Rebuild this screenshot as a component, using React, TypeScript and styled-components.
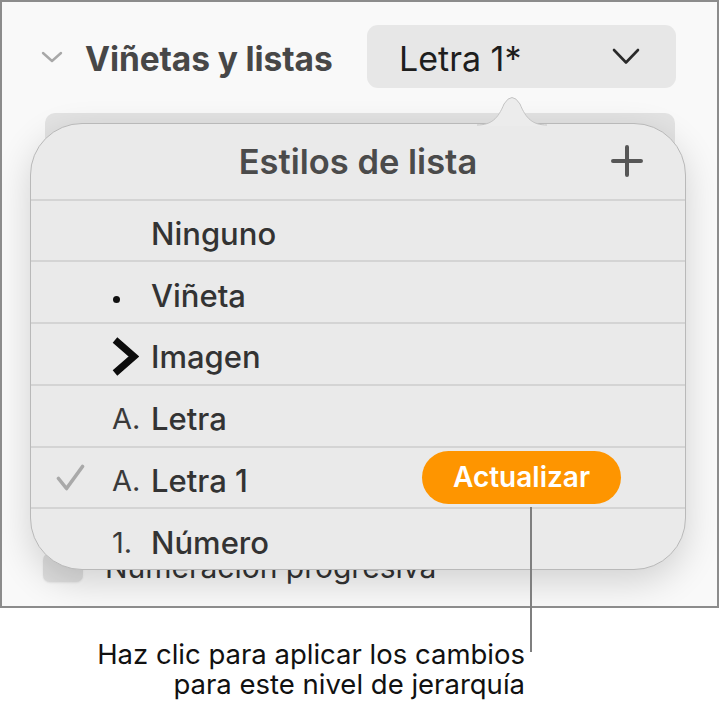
import styled, { createGlobalStyle } from 'styled-components';

const GlobalStyle = createGlobalStyle`
  html, body {
    margin: 0;
    padding: 0;
    background: #ffffff;
  }
  body {
    font-family: 'Inter', 'Noto Sans', sans-serif;
    -webkit-font-smoothing: antialiased;
  }
`;

const Page = styled.div`
  position: relative;
  width: 721px;
  height: 705px;
  overflow: hidden;
`;

const Frame = styled.div`
  position: relative;
  box-sizing: border-box;
  width: 719px;
  height: 608px;
  border: 2px solid #8c8c8c;
  background: #f9f9f9;
  overflow: hidden;
`;

const Header = styled.div`
  display: flex;
  align-items: center;
  padding: 23px 41px 0 39px;
`;

const Disclosure = styled.svg`
  width: 22px;
  height: 12px;
  margin-right: 22px;
  flex-shrink: 0;
`;

const SectionTitle = styled.h2`
  margin: 4px 0 0;
  font-size: 33.5px;
  font-weight: 700;
  color: #474747;
  letter-spacing: -0.1px;
`;

const PopupButton = styled.button`
  margin-left: auto;
  box-sizing: border-box;
  width: 309px;
  height: 63px;
  display: flex;
  align-items: center;
  justify-content: space-between;
  padding: 4px 36px 0 32px;
  border: none;
  border-radius: 11px;
  background: #e7e7e7;
  font-family: inherit;
  font-size: 34px;
  color: #1e1e1e;

  svg {
    margin-top: -4px;
  }
`;

const BehindCard = styled.div`
  margin: 25px 0 0 43px;
  width: 630px;
  height: 80px;
  border-radius: 10px;
  background: #e3e3e3;
`;

const CheckRow = styled.div`
  display: flex;
  align-items: center;
  gap: 22px;
  margin: 360px 0 0 41px;
`;

const CheckBox = styled.div`
  width: 40px;
  height: 29px;
  border-radius: 7px;
  background: #dedede;
  box-shadow: 0 1px 2px rgba(0, 0, 0, 0.08);
`;

const CheckLabel = styled.span`
  font-size: 30px;
  line-height: 29px;
  color: #333333;
`;

const Popover = styled.div`
  position: absolute;
  left: 28px;
  top: 121px;
  box-sizing: border-box;
  width: 656px;
  height: 447px;
  display: flex;
  flex-direction: column;
  background: #eaeaea;
  border: 1px solid #b9b9b9;
  border-radius: 52px;
  box-shadow: 0 12px 36px rgba(0, 0, 0, 0.16);
`;

const Arrow = styled.svg`
  position: absolute;
  left: 446px;
  top: -29px;
  width: 70px;
  height: 31px;
`;

const PopoverHeader = styled.div`
  height: 75px;
  display: grid;
  grid-template-columns: 1fr auto 1fr;
  align-items: center;
`;

const PopoverTitle = styled.div`
  grid-column: 2;
  margin-top: 1px;
  font-size: 34.5px;
  font-weight: 600;
  color: #4b4b4b;
`;

const PlusButton = styled.svg`
  grid-column: 3;
  justify-self: end;
  margin-right: 42px;
  width: 32px;
  height: 32px;
`;

const Row = styled.div`
  box-sizing: border-box;
  height: 62px;
  display: flex;
  align-items: center;
  padding-left: 25px;
  border-top: 2px solid #d4d4d4;
`;

const CheckCell = styled.div`
  width: 56px;
  display: flex;
  align-items: center;
`;

const MarkerCell = styled.div<{ $shift: number }>`
  width: 39px;
  display: flex;
  align-items: center;
  margin-top: ${(p) => p.$shift}px;
  font-size: 29px;
  color: #3a3a3a;
`;

const Dot = styled.span`
  width: 7px;
  height: 7px;
  margin-left: 1px;
  border-radius: 50%;
  background: #111111;
`;

const Label = styled.span`
  margin-top: 6px;
  font-size: 31px;
  font-weight: 500;
  color: #333333;
`;

const UpdateButton = styled.button`
  margin-left: auto;
  margin-right: 64px;
  height: 53px;
  padding: 0 31px;
  border: none;
  border-radius: 27px;
  background: #fe9500;
  color: #ffffff;
  font-family: inherit;
  font-size: 28px;
  font-weight: 600;
`;

const CalloutLine = styled.div`
  position: absolute;
  left: 530px;
  top: 507px;
  width: 2px;
  height: 145px;
  background: #7f7f7f;
`;

const Callout = styled.div`
  margin: 31px 196px 0 0;
  text-align: right;
  font-size: 27.5px;
  color: #111111;
`;

const CalloutLine1 = styled.span`
  display: block;
  height: 30px;
  line-height: 30px;
`;

type Style = {
  label: string;
  marker?: string;
  checked?: boolean;
  update?: boolean;
};

const styles: Style[] = [
  { label: 'Ninguno' },
  { label: 'Viñeta', marker: 'dot' },
  { label: 'Imagen', marker: 'image' },
  { label: 'Letra', marker: 'A.' },
  { label: 'Letra 1', marker: 'A.', checked: true, update: true },
  { label: 'Número', marker: '1.' },
];

const Marker = ({ marker }: { marker?: string }) => {
  if (!marker) return <MarkerCell $shift={0} />;
  if (marker === 'dot')
    return (
      <MarkerCell $shift={15}>
        <Dot />
      </MarkerCell>
    );
  if (marker === 'image')
    return (
      <MarkerCell $shift={5}>
        <svg width='27' height='39' viewBox='0 0 27 39'>
          <path d='M3 3 L22 19.5 L3 36' fill='none' stroke='#0c0c0c' strokeWidth='7' />
        </svg>
      </MarkerCell>
    );
  return <MarkerCell $shift={6}>{marker}</MarkerCell>;
};

const App = () => {
  return (
    <>
      <GlobalStyle />
      <Page>
        <Frame>
          <Header>
            <Disclosure viewBox='0 0 22 12'>
              <path d='M2 2 L11 10 L20 2' fill='none' stroke='#a8a8a8' strokeWidth='2.4' strokeLinecap='round' strokeLinejoin='round' />
            </Disclosure>
            <SectionTitle>Viñetas y listas</SectionTitle>
            <PopupButton>
              <span>Letra 1*</span>
              <svg width='28' height='17' viewBox='0 0 28 17'>
                <path d='M2 2 L14 14.5 L26 2' fill='none' stroke='#2a2a2a' strokeWidth='2.6' strokeLinecap='round' strokeLinejoin='round' />
              </svg>
            </PopupButton>
          </Header>
          <BehindCard />
          <CheckRow>
            <CheckBox />
            <CheckLabel>Numeración progresiva</CheckLabel>
          </CheckRow>

          <Popover>
            <Arrow viewBox='0 0 70 31'>
              <path d='M0 30 C14 30 21 24 27 9 Q35 -4 43 9 C49 24 56 30 70 30 L70 31 L0 31 Z' fill='#ececec' />
              <path d='M0 30 C14 30 21 24 27 9 Q35 -4 43 9 C49 24 56 30 70 30' fill='none' stroke='#c4c4c4' strokeWidth='1' />
            </Arrow>
            <PopoverHeader>
              <PopoverTitle>Estilos de lista</PopoverTitle>
              <PlusButton viewBox='0 0 32 32'>
                <path d='M16 2 V30 M2 16 H30' stroke='#575757' strokeWidth='4' strokeLinecap='round' />
              </PlusButton>
            </PopoverHeader>
            {styles.map((s) => (
              <Row key={s.label}>
                <CheckCell>
                  {s.checked && (
                    <svg width='29' height='27' viewBox='0 0 29 27'>
                      <path d='M2.5 14.5 L10.5 24.5 L26.5 2.5' fill='none' stroke='#a9a9a9' strokeWidth='3.6' strokeLinecap='round' strokeLinejoin='round' />
                    </svg>
                  )}
                </CheckCell>
                <Marker marker={s.marker} />
                <Label>{s.label}</Label>
                {s.update && <UpdateButton>Actualizar</UpdateButton>}
              </Row>
            ))}
          </Popover>
        </Frame>
        <CalloutLine />
        <Callout>
          <CalloutLine1>Haz clic para aplicar los cambios</CalloutLine1>
          <CalloutLine1>para este nivel de jerarquía</CalloutLine1>
        </Callout>
      </Page>
    </>
  );
};

export default App;
